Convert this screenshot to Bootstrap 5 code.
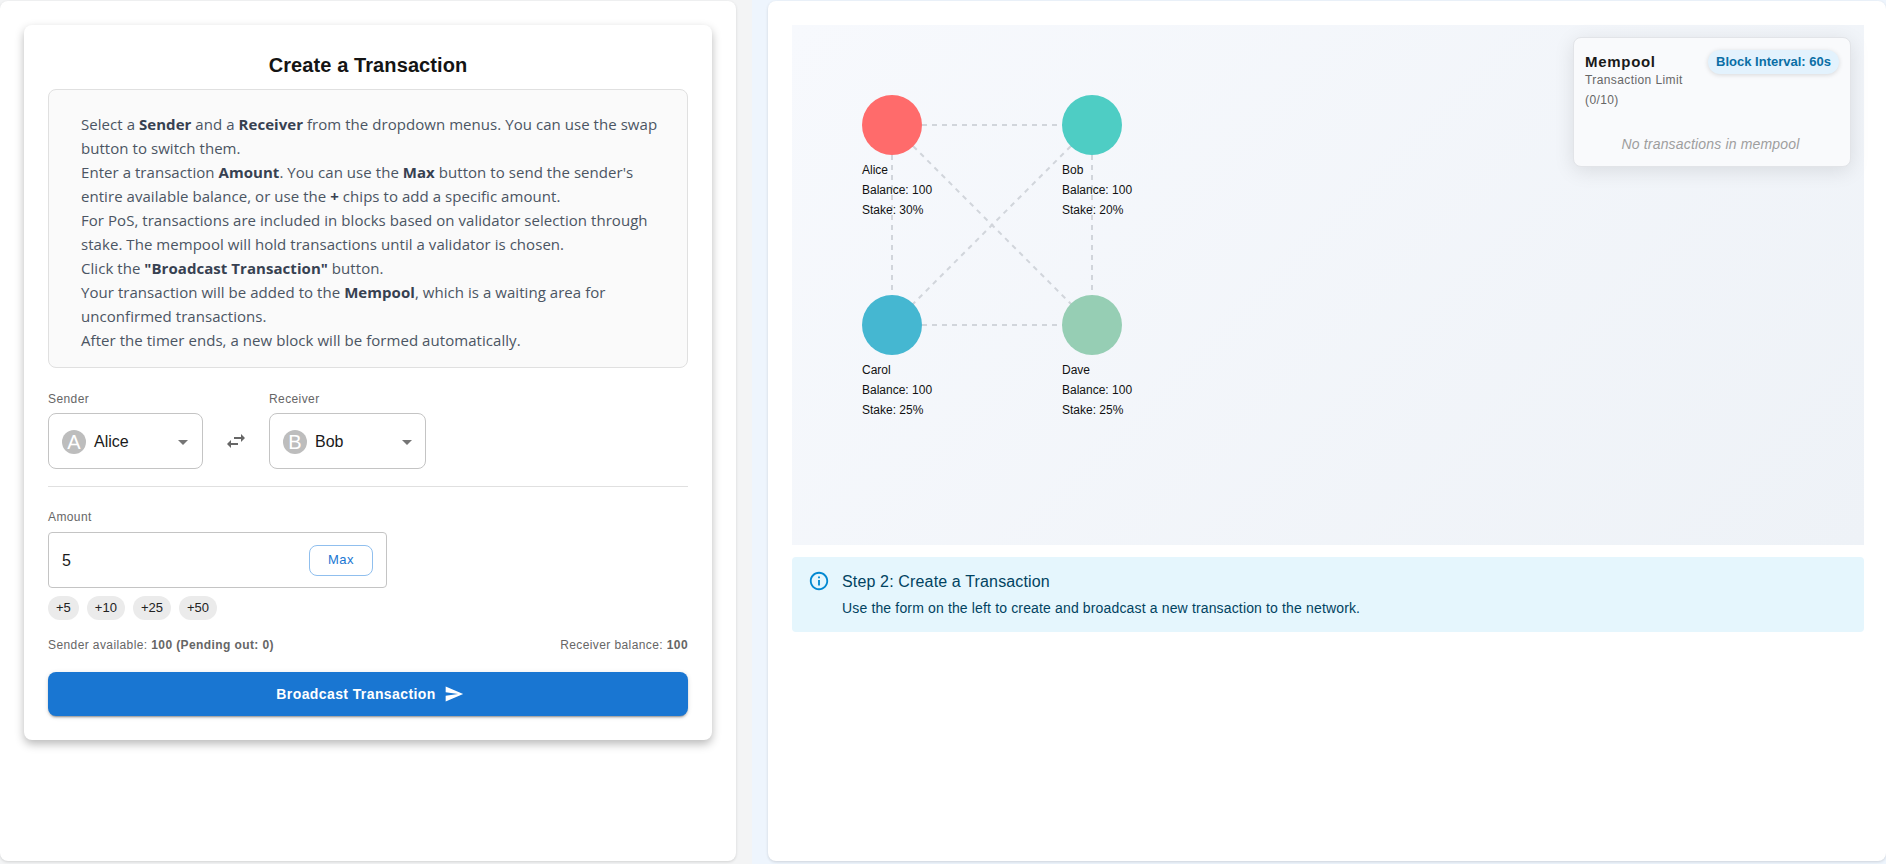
<!DOCTYPE html>
<html lang="en">
  <head>
    <meta charset="UTF-8" />
    <meta name="viewport" content="width=device-width, initial-scale=1.0" />
    <title>Create a Transaction</title>
    <link href="https://cdn.jsdelivr.net/npm/bootstrap@5.3.3/dist/css/bootstrap.min.css" rel="stylesheet" />
    <script src="https://cdn.jsdelivr.net/npm/bootstrap@5.3.3/dist/js/bootstrap.bundle.min.js"></script>
    <style>
      html, body { height: 100%; overflow: hidden; }
      body { font-family: "Liberation Sans", Arial, sans-serif; color: #1a1a1a; }
      .page-wrap { height: 864px; }
      .left-col { width: 752px; padding: 1px 16px 0 0; background: #f3f4f5; }
      .right-col { padding: 1px 0 0 16px; background: #eef5fd; }
      .side-panel { height: 860px; background: #fff; border-radius: 8px; box-shadow: 0 1px 3px rgba(0,0,0,.14); padding: 24px 24px 0; }
      .main-panel { height: 860px; background: #fff; border-radius: 8px; box-shadow: 0 1px 3px rgba(0,0,0,.14); padding: 24px 22px 0 24px; }
      .form-card { border: 0; border-radius: 8px; height: 715px; padding: 24px; box-shadow: 0 4px 10px rgba(0,0,0,.28); }
      .form-title { font-size: 20px; font-weight: 700; line-height: 32px; letter-spacing: .1px; text-align: center; margin: 0 0 8px; color: #141414; }
      .help-box { height: 279px; background: #fafafa; border: 1px solid #e0e0e0; border-radius: 8px; padding: 22px 16px 0 32px; font-family: "Open Sans", sans-serif; font-size: 15px; letter-spacing: .05px; line-height: 24px; color: #4b5563; margin-bottom: 24px; }
      .help-box b { color: #374151; }
      .cap { font-size: 12px; line-height: 14px; letter-spacing: .4px; color: #666; }
      .cap-gap { margin-bottom: 7px; }
      .picker { height: 56px; border: 1px solid #c4c4c4; border-radius: 8px; padding: 2px 7px 0 13px; font-size: 16px; }
      .picker-a { width: 155px; }
      .picker-b { width: 157px; padding-right: 6px; }
      .ava { width: 24px; height: 24px; border-radius: 50%; background: #bdbdbd; color: #fff; font-size: 20px; line-height: 24px; text-align: center; margin-right: 8px; }
      .swap-slot { width: 66px; height: 56px; }
      .rule { height: 1px; background: #e0e0e0; margin: 17px 0 23px; }
      .amt-box { width: 339px; height: 56px; border: 1px solid #c4c4c4; border-radius: 4px; padding: 0 13px; }
      .amt-input { border: 0; outline: 0; padding: 2px 0 0; width: 200px; font-size: 16px; color: #1a1a1a; font-family: inherit; }
      .max-btn { width: 64px; height: 31px; padding: 0; font-size: 13px; letter-spacing: .4px; color: #1976d2; background: #fff; border: 1px solid #90bfee; border-radius: 8px; }
      .chip-row { gap: 8px; margin: 8px 0 18px; }
      .add-chip { height: 24px; line-height: 24px; padding: 0 8px; border-radius: 16px; background: #ebebeb; color: #222; font-size: 13px; }
      .send-btn { height: 44px; margin-top: 20px; padding: 0 0 0 4px; background: #1976d2; border: 0; border-radius: 8px; font-size: 14px; font-weight: 700; letter-spacing: .4px; box-shadow: 0 3px 1px -2px rgba(0,0,0,.2), 0 2px 2px rgba(0,0,0,.14), 0 1px 5px rgba(0,0,0,.12); }
      .net-canvas { height: 520px; background: linear-gradient(135deg, #f7f9fd 0%, #eef2f7 100%); }
      .net-svg { position: absolute; inset: 0; width: 100%; height: 100%; }
      .net-svg text { font-family: "Liberation Sans", Arial, sans-serif; font-size: 12px; fill: #111; }
      .pool-card { position: absolute; top: 12px; right: 13px; width: 278px; height: 130px; background: #f9fafc; border: 1px solid #e2e4e8; border-radius: 8px; box-shadow: 0 4px 20px rgba(0,0,0,.1); padding: 12px 11px; }
      .pool-title { font-size: 15px; font-weight: 700; letter-spacing: .7px; line-height: 24px; color: #1a1a1a; }
      .pool-sub { font-size: 12px; letter-spacing: .4px; line-height: 20px; color: #666; margin-top: -4px; }
      .pool-chip { height: 24px; line-height: 24px; padding: 0 8px; border-radius: 16px; background: #e3f2fd; color: #0a6ea5; font-size: 13px; font-weight: 700; box-shadow: 0 1px 5px rgba(0,0,0,.14); }
      .pool-empty { font-size: 14px; font-style: italic; letter-spacing: .17px; color: #9e9e9e; text-align: center; margin-top: 24px; padding-right: 3px; }
      .step-alert { height: 75px; margin: 12px 0 0; padding: 0 16px 2px; background: #e5f6fd; color: #014361; border: 0; border-radius: 4px; gap: 12px; }
      .step-ico { margin-top: 13px; }
      .step-title { font-size: 16px; line-height: 24px; letter-spacing: .15px; }
      .step-body { font-size: 14px; line-height: 20px; letter-spacing: .15px; margin-top: 4px; }
    </style>
  </head>
  <body>
    <div class="page-wrap d-flex">
      <div class="left-col flex-shrink-0">
        <div class="side-panel">
          <div class="card form-card">
            <h1 class="form-title">Create a Transaction</h1>
            <div class="help-box">
              <div>Select a <b>Sender</b> and a <b>Receiver</b> from the dropdown menus. You can use the swap button to switch them.</div>
              <div>Enter a transaction <b>Amount</b>. You can use the <b>Max</b> button to send the sender's entire available balance, or use the <b>+</b> chips to add a specific amount.</div>
              <div>For PoS, transactions are included in blocks based on validator selection through stake. The mempool will hold transactions until a validator is chosen.</div>
              <div>Click the <b>"Broadcast Transaction"</b> button.</div>
              <div>Your transaction will be added to the <b>Mempool</b>, which is a waiting area for unconfirmed transactions.</div>
              <div>After the timer ends, a new block will be formed automatically.</div>
            </div>

            <div class="d-flex align-items-end">
              <div>
                <div class="cap cap-gap">Sender</div>
                <div class="picker picker-a d-flex align-items-center">
                  <span class="ava">A</span><span>Alice</span>
                  <svg class="ms-auto" width="24" height="24" viewBox="0 0 24 24" fill="#757575"><path d="M7 10l5 5 5-5z" /></svg>
                </div>
              </div>
              <div class="swap-slot d-flex align-items-center justify-content-center">
                <svg width="24" height="24" viewBox="0 0 24 24" fill="#666"><path d="M6.99 11 3 15l3.99 4v-3H14v-2H6.99v-3zM21 9l-3.99-4v3H10v2h7.01v3L21 9z" /></svg>
              </div>
              <div>
                <div class="cap cap-gap">Receiver</div>
                <div class="picker picker-b d-flex align-items-center">
                  <span class="ava">B</span><span>Bob</span>
                  <svg class="ms-auto" width="24" height="24" viewBox="0 0 24 24" fill="#757575"><path d="M7 10l5 5 5-5z" /></svg>
                </div>
              </div>
            </div>

            <div class="rule"></div>

            <div class="cap mb-2">Amount</div>
            <div class="amt-box d-flex align-items-center justify-content-between">
              <input class="amt-input" type="text" value="5" />
              <button type="button" class="btn max-btn">Max</button>
            </div>
            <div class="chip-row d-flex">
              <span class="add-chip">+5</span>
              <span class="add-chip">+10</span>
              <span class="add-chip">+25</span>
              <span class="add-chip">+50</span>
            </div>
            <div class="d-flex justify-content-between cap">
              <span>Sender available: <b>100 (Pending out: 0)</b></span>
              <span>Receiver balance: <b>100</b></span>
            </div>
            <button type="button" class="btn btn-primary send-btn w-100 d-flex align-items-center justify-content-center gap-2">
              Broadcast Transaction
              <svg width="20" height="20" viewBox="0 0 24 24" fill="#fff"><path d="M2.01 21 23 12 2.01 3 2 10l15 2-15 2z" /></svg>
            </button>
          </div>
        </div>
      </div>

      <div class="right-col flex-grow-1">
        <div class="main-panel">
          <div class="net-canvas position-relative">
            <svg class="net-svg">
              <g stroke="#d1d5db" stroke-width="2" stroke-dasharray="5,5" fill="none">
                <line x1="100" y1="100" x2="300" y2="100" />
                <line x1="100" y1="100" x2="100" y2="300" />
                <line x1="100" y1="100" x2="300" y2="300" />
                <line x1="300" y1="100" x2="100" y2="300" />
                <line x1="300" y1="100" x2="300" y2="300" />
                <line x1="100" y1="300" x2="300" y2="300" />
              </g>
              <circle cx="100" cy="100" r="30" fill="#ff6b6b" />
              <circle cx="300" cy="100" r="30" fill="#4ecdc4" />
              <circle cx="100" cy="300" r="30" fill="#45b7d1" />
              <circle cx="300" cy="300" r="30" fill="#96ceb4" />
              <text x="70" y="149">Alice</text>
              <text x="70" y="169">Balance: 100</text>
              <text x="70" y="189">Stake: 30%</text>
              <text x="270" y="149">Bob</text>
              <text x="270" y="169">Balance: 100</text>
              <text x="270" y="189">Stake: 20%</text>
              <text x="70" y="349">Carol</text>
              <text x="70" y="369">Balance: 100</text>
              <text x="70" y="389">Stake: 25%</text>
              <text x="270" y="349">Dave</text>
              <text x="270" y="369">Balance: 100</text>
              <text x="270" y="389">Stake: 25%</text>
            </svg>
            <div class="pool-card">
              <div class="d-flex justify-content-between align-items-start">
                <div>
                  <div class="pool-title">Mempool</div>
                  <div class="pool-sub">Transaction Limit<br />(0/10)</div>
                </div>
                <span class="pool-chip">Block Interval: 60s</span>
              </div>
              <div class="pool-empty">No transactions in mempool</div>
            </div>
          </div>
          <div class="alert step-alert d-flex align-items-center">
            <svg class="flex-shrink-0 align-self-start step-ico" width="22" height="22" viewBox="0 0 24 24" fill="#0288d1"><path d="M11 7h2v2h-2zm0 4h2v6h-2zm1-9C6.48 2 2 6.48 2 12s4.48 10 10 10 10-4.48 10-10S17.52 2 12 2zm0 18c-4.41 0-8-3.59-8-8s3.59-8 8-8 8 3.59 8 8-3.59 8-8 8z" /></svg>
            <div>
              <div class="step-title">Step 2: Create a Transaction</div>
              <div class="step-body">Use the form on the left to create and broadcast a new transaction to the network.</div>
            </div>
          </div>
        </div>
      </div>
    </div>
  </body>
</html>
